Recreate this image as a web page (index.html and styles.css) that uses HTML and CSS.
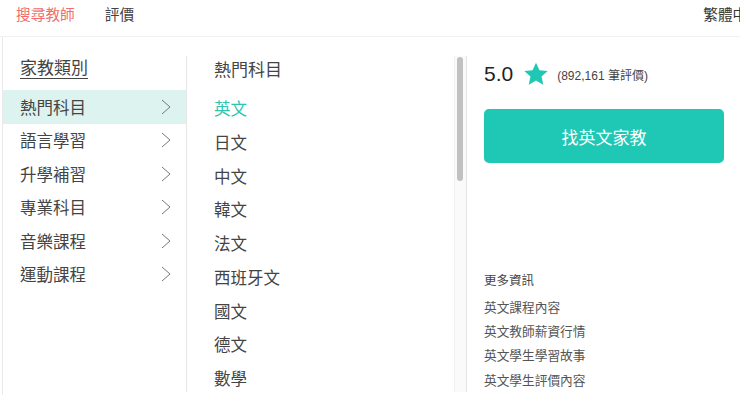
FILE: index.html
```html
<!DOCTYPE html>
<html>
  <head>
    <meta charset="utf-8">
    <link rel="stylesheet" href="styles.css">
  </head>
<body>
  <div class="topbar">
    <a class="nav active">搜尋教師</a>
    <a class="nav">評價</a>
    <span class="lang">繁體中文</span>
  </div>
  <div class="panel">
    <div class="cats">
      <h2 class="cats-title">家教類別</h2>
      <ul class="cat-list">
        <li class="cat on">熱門科目<svg class="chev" viewBox="0 0 10 16"><polyline points="1,1 9,8 1,15"/></svg></li>
        <li class="cat">語言學習<svg class="chev" viewBox="0 0 10 16"><polyline points="1,1 9,8 1,15"/></svg></li>
        <li class="cat">升學補習<svg class="chev" viewBox="0 0 10 16"><polyline points="1,1 9,8 1,15"/></svg></li>
        <li class="cat">專業科目<svg class="chev" viewBox="0 0 10 16"><polyline points="1,1 9,8 1,15"/></svg></li>
        <li class="cat">音樂課程<svg class="chev" viewBox="0 0 10 16"><polyline points="1,1 9,8 1,15"/></svg></li>
        <li class="cat">運動課程<svg class="chev" viewBox="0 0 10 16"><polyline points="1,1 9,8 1,15"/></svg></li>
      </ul>
    </div>
    <div class="subjects">
      <div class="sub-inner">
        <h2 class="sub-title">熱門科目</h2>
        <ul class="sub-list">
          <li class="sub on">英文</li>
          <li class="sub">日文</li>
          <li class="sub">中文</li>
          <li class="sub">韓文</li>
          <li class="sub">法文</li>
          <li class="sub">西班牙文</li>
          <li class="sub">國文</li>
          <li class="sub">德文</li>
          <li class="sub">數學</li>
        </ul>
      </div>
      <div class="track"><div class="thumb"></div></div>
    </div>
    <div class="detail">
      <div class="rating">
        <span class="score">5.0</span>
        <svg class="star" viewBox="0 0 24 24"><path d="M12 1.5l3.2 7 7.6.8-5.7 5.1 1.6 7.5L12 18.1l-6.7 3.8 1.6-7.5L1.2 9.3l7.6-.8z"/></svg>
        <span class="count">(892,161 筆評價)</span>
      </div>
      <button class="find">找英文家教</button>
      <div class="more">
        <h3 class="more-title">更多資訊</h3>
        <a class="more-link">英文課程內容</a>
        <a class="more-link">英文教師薪資行情</a>
        <a class="more-link">英文學生學習故事</a>
        <a class="more-link">英文學生評價內容</a>
      </div>
    </div>
  </div>
</body>
</html>
```

FILE: styles.css
```css
html, body {
  margin:0;
  padding:0;
  background:#fff;
  overflow:hidden;
  color:#333;
  font-family:"Liberation Sans", "Noto Sans CJK TC", sans-serif;
}
ul { list-style:none; margin:0; padding:0; }
h2, h3 { margin:0; font-weight:normal; }

.topbar {
  display:flex;
  align-items:center;
  height:36px;
  padding-left:16px;
  font-size:14.7px;
  border-bottom:1px solid #f0f0f0;
}
.nav { color:#444; margin-right:30px; margin-top:-10px; }
.nav.active { color:#f26d6b; }
.lang { margin-left:auto; margin-right:-22px; color:#333; margin-top:-10px; }

.panel {
  display:flex;
  margin-left:2px;
  height:358px;
  border-left:1px solid #eaeaea;
}

.cats {
  width:183px;
  margin-top:19px;
  height:336px;
  border-right:1px solid #e6e6e6;
}
.cats-title {
  font-size:17px;
  line-height:26px;
  padding-left:17px;
  margin-bottom:8px;
  color:#444;
  text-decoration:underline;
  text-underline-offset:4px;
  text-decoration-thickness:1px;
}
.cat {
  display:flex;
  align-items:center;
  justify-content:space-between;
  height:33.5px;
  padding:0 15px 0 17px;
  font-size:16.5px;
  color:#444;
}
.cat.on { background:#ddf3ef; }
.chev { width:10px; height:16px; fill:none; stroke:#777; stroke-width:1; }

.subjects {
  display:flex;
  width:280px;
  margin-top:19px;
  height:336px;
}
.sub-inner { flex:1; padding-left:27px; padding-top:2px; }
.sub-title {
  font-size:17px;
  line-height:26px;
  margin-bottom:9px;
  color:#444;
}
.sub {
  font-size:16.5px;
  line-height:33.75px;
  color:#444;
}
.sub.on { color:#2ec4b0; }
.track {
  width:11px;
  border-left:1px solid #f0f0f0;
  border-right:1px solid #e4e4e4;
  background:#fafafa;
  padding-top:1px;
}
.thumb {
  width:6px;
  height:124px;
  margin-left:2px;
  border-radius:3px;
  background:#c1c1c1;
}

.detail {
  flex:1;
  display:flex;
  flex-direction:column;
  padding:19px 16px 0 17px;
}
.rating {
  display:flex;
  align-items:center;
  height:36px;
}
.score { font-size:21px; color:#222; }
.star { width:26px; height:26px; fill:#1fc7b4; margin:0 8px 0 10px; }
.count { font-size:12px; color:#444; }
.find {
  margin-top:17px;
  height:54px;
  border:none;
  border-radius:5px;
  background:#1ec8b5;
  color:#fff;
  font-size:17px;
  font-family:inherit;
}
.more { margin-top:108px; display:flex; flex-direction:column; }
.more-title {
  font-size:12.5px;
  line-height:20px;
  color:#444;
  margin-bottom:5px;
}
.more-link {
  font-size:12.7px;
  line-height:24.2px;
  color:#555;
}
```
